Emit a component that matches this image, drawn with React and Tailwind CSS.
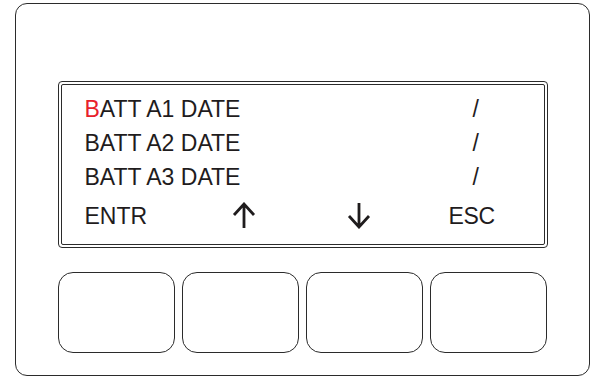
import React from "react";

const rows = ["A1", "A2", "A3"];

const Arrow = ({ down }) => (
  <svg width="24" height="27" viewBox="0 0 24 27" className={down ? "rotate-180" : ""}>
    <path d="M12 2 L12 26 M2 13 L12 2 L22 13" fill="none" stroke="#1f1c1d" strokeWidth="2.8" />
  </svg>
);

export default function App() {
  return (
    <div className="w-[595px] h-[377px] bg-white overflow-hidden font-['Liberation_Sans',Arial,sans-serif] text-[#1f1c1d]">
      <div className="ml-[15px] mt-[3px] w-[575px] h-[373px] border-[1.6px] border-[#2b2b2b] rounded-[12px] px-[41.5px] pt-[76.5px]">
        {/* display */}
        <div className="h-[167px] border-[1.6px] border-[#2b2b2b] rounded-[4px] p-[2px]">
          <div className="h-full border-[1.6px] border-[#2b2b2b] rounded-[2px] pl-[23px] pt-[7px] text-[23px]">
            {rows.map((r, i) => (
              <div key={r} className="flex h-[34px] leading-[34px]">
                <div className="w-[388px]">
                  {i === 0 ? <span className="text-[#e8202a]">B</span> : "B"}
                  {`ATT ${r} DATE`}
                </div>
                <div>/</div>
              </div>
            ))}
            <div className="flex items-center h-[34px] leading-[34px] mt-[5px]">
              <div className="w-[140px]">ENTR</div>
              <div className="w-[38px] flex justify-center"><Arrow /></div>
              <div className="w-[77px]" />
              <div className="w-[38px] flex justify-center"><Arrow down /></div>
              <div className="w-[71px]" />
              <div className="tracking-[-0.3px]">ESC</div>
            </div>
          </div>
        </div>
        {/* keys */}
        <div className="flex gap-[7px] mt-[24px]">
          {[0, 1, 2, 3].map((k) => (
            <div key={k} className="w-[117px] h-[81px] border-[1.3px] border-[#2b2b2b] rounded-[15px]" />
          ))}
        </div>
      </div>
    </div>
  );
}
